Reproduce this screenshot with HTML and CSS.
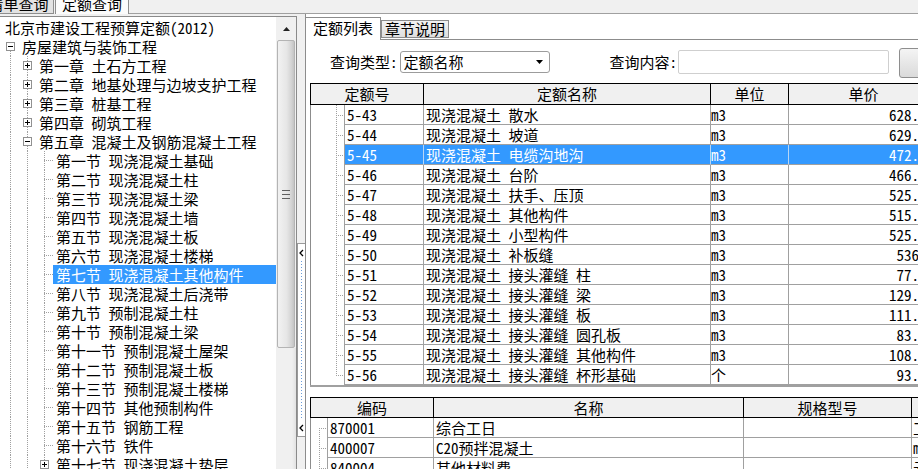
FILE: index.html
```html
<!DOCTYPE html>
<html lang="zh-CN">
<head>
<meta charset="utf-8">
<title>定额查询</title>
<link rel="stylesheet" href="styles.css">
</head>
<body>
<div class="app">
  <div class="toptabs">
    <div class="ttab ttab1">清单查询</div>
    <div class="ttab ttab2">定额查询</div>
    <div class="tfill"></div>
  </div>
  <div class="main">
    <div class="left">
      <div class="treebox">
        <div class="tree">
          <div class="tr"><span class="lbl">北京市建设工程预算定额(2012)</span></div>
          <div class="tr"><span class="gc vb"><svg class="ex" width="9" height="9" viewBox="0 0 9 9"><rect x=".5" y=".5" width="8" height="8" fill="#fff" stroke="#919191"/><path d="M2 4.5h5" stroke="#000"/></svg></span><span class="lbl">房屋建筑与装饰工程</span></div>
          <div class="tr"><span class="gc v"></span><span class="gc v"><svg class="ex" width="9" height="9" viewBox="0 0 9 9"><rect x=".5" y=".5" width="8" height="8" fill="#fff" stroke="#919191"/><path d="M2 4.5h5M4.5 2v5" stroke="#000"/></svg></span><span class="lbl">第一章 土石方工程</span></div>
          <div class="tr"><span class="gc v"></span><span class="gc v"><svg class="ex" width="9" height="9" viewBox="0 0 9 9"><rect x=".5" y=".5" width="8" height="8" fill="#fff" stroke="#919191"/><path d="M2 4.5h5M4.5 2v5" stroke="#000"/></svg></span><span class="lbl">第二章 地基处理与边坡支护工程</span></div>
          <div class="tr"><span class="gc v"></span><span class="gc v"><svg class="ex" width="9" height="9" viewBox="0 0 9 9"><rect x=".5" y=".5" width="8" height="8" fill="#fff" stroke="#919191"/><path d="M2 4.5h5M4.5 2v5" stroke="#000"/></svg></span><span class="lbl">第三章 桩基工程</span></div>
          <div class="tr"><span class="gc v"></span><span class="gc v"><svg class="ex" width="9" height="9" viewBox="0 0 9 9"><rect x=".5" y=".5" width="8" height="8" fill="#fff" stroke="#919191"/><path d="M2 4.5h5M4.5 2v5" stroke="#000"/></svg></span><span class="lbl">第四章 砌筑工程</span></div>
          <div class="tr"><span class="gc v"></span><span class="gc v"><svg class="ex" width="9" height="9" viewBox="0 0 9 9"><rect x=".5" y=".5" width="8" height="8" fill="#fff" stroke="#919191"/><path d="M2 4.5h5" stroke="#000"/></svg></span><span class="lbl">第五章 混凝土及钢筋混凝土工程</span></div>
          <div class="tr"><span class="gc v"></span><span class="gc v"></span><span class="gc vh"></span><span class="lbl">第一节 现浇混凝土基础</span></div>
          <div class="tr"><span class="gc v"></span><span class="gc v"></span><span class="gc vh"></span><span class="lbl">第二节 现浇混凝土柱</span></div>
          <div class="tr"><span class="gc v"></span><span class="gc v"></span><span class="gc vh"></span><span class="lbl">第三节 现浇混凝土梁</span></div>
          <div class="tr"><span class="gc v"></span><span class="gc v"></span><span class="gc vh"></span><span class="lbl">第四节 现浇混凝土墙</span></div>
          <div class="tr"><span class="gc v"></span><span class="gc v"></span><span class="gc vh"></span><span class="lbl">第五节 现浇混凝土板</span></div>
          <div class="tr"><span class="gc v"></span><span class="gc v"></span><span class="gc vh"></span><span class="lbl">第六节 现浇混凝土楼梯</span></div>
          <div class="tr sel"><span class="gc v"></span><span class="gc v"></span><span class="gc vh"></span><span class="lbl">第七节 现浇混凝土其他构件</span></div>
          <div class="tr"><span class="gc v"></span><span class="gc v"></span><span class="gc vh"></span><span class="lbl">第八节 现浇混凝土后浇带</span></div>
          <div class="tr"><span class="gc v"></span><span class="gc v"></span><span class="gc vh"></span><span class="lbl">第九节 预制混凝土柱</span></div>
          <div class="tr"><span class="gc v"></span><span class="gc v"></span><span class="gc vh"></span><span class="lbl">第十节 预制混凝土梁</span></div>
          <div class="tr"><span class="gc v"></span><span class="gc v"></span><span class="gc vh"></span><span class="lbl">第十一节 预制混凝土屋架</span></div>
          <div class="tr"><span class="gc v"></span><span class="gc v"></span><span class="gc vh"></span><span class="lbl">第十二节 预制混凝土板</span></div>
          <div class="tr"><span class="gc v"></span><span class="gc v"></span><span class="gc vh"></span><span class="lbl">第十三节 预制混凝土楼梯</span></div>
          <div class="tr"><span class="gc v"></span><span class="gc v"></span><span class="gc vh"></span><span class="lbl">第十四节 其他预制构件</span></div>
          <div class="tr"><span class="gc v"></span><span class="gc v"></span><span class="gc vh"></span><span class="lbl">第十五节 钢筋工程</span></div>
          <div class="tr"><span class="gc v"></span><span class="gc v"></span><span class="gc vh"></span><span class="lbl">第十六节 铁件</span></div>
          <div class="tr"><span class="gc v"></span><span class="gc v"></span><span class="gc v"><svg class="ex" width="9" height="9" viewBox="0 0 9 9"><rect x=".5" y=".5" width="8" height="8" fill="#fff" stroke="#919191"/><path d="M2 4.5h5M4.5 2v5" stroke="#000"/></svg></span><span class="lbl">第十七节 现浇混凝土垫层</span></div>
        </div>
        <div class="vscroll">
          <div class="sb-up"><svg width="7" height="4" viewBox="0 0 7 4"><path d="M0 4L3.5 0L7 4Z" fill="#222"/></svg></div>
          <div class="sb-thumb"><svg width="8" height="9" viewBox="0 0 8 9"><path d="M0 .5h8M0 4.5h8M0 8.5h8" stroke="#606060"/></svg></div>
          <div class="sb-track"></div>
        </div>
      </div>
    </div>
    <div class="splitter">
      <div class="handle">
        <svg width="7" height="192" viewBox="0 0 7 192"><path d="M5 6L2 9L5 12" fill="none" stroke="#000" stroke-width="1.3"/><path d="M3.5 17V176" stroke="#6a9bd8" stroke-dasharray="1 2"/><path d="M5 181L2 184L5 187" fill="none" stroke="#000" stroke-width="1.3"/></svg>
      </div>
    </div>
    <div class="right">
      <div class="rtabs">
        <div class="rtab on">定额列表</div>
        <div class="rtab off">章节说明</div>
      </div>
      <div class="page">
        <div class="query">
          <span class="qlabel">查询类型:</span>
          <div class="select"><span>定额名称</span><svg width="7" height="4" viewBox="0 0 7 4"><path d="M0 0H7L3.5 4Z" fill="#000"/></svg></div>
          <span class="qlabel ql2">查询内容:</span>
          <div class="input"></div>
          <div class="btn"></div>
        </div>

        <div class="grid g1">
          <div class="hdr">
            <div class="h" style="width:113px">定额号</div>
            <div class="h" style="width:287px">定额名称</div>
            <div class="h" style="width:78px">单位</div>
            <div class="h" style="width:150px">单价</div>
          </div>
          <div class="row"><span class="gut gv"></span><span class="c c1">5-43</span><span class="c c2">现浇混凝土 散水</span><span class="c c3">m3</span><span class="c c4">628.52</span></div>
          <div class="row"><span class="gut gv"></span><span class="c c1">5-44</span><span class="c c2">现浇混凝土 坡道</span><span class="c c3">m3</span><span class="c c4">629.17</span></div>
          <div class="row on"><span class="gut gv"></span><span class="c c1">5-45</span><span class="c c2">现浇混凝土 电缆沟地沟</span><span class="c c3">m3</span><span class="c c4">472.85</span></div>
          <div class="row"><span class="gut gv"></span><span class="c c1">5-46</span><span class="c c2">现浇混凝土 台阶</span><span class="c c3">m3</span><span class="c c4">466.30</span></div>
          <div class="row"><span class="gut gv"></span><span class="c c1">5-47</span><span class="c c2">现浇混凝土 扶手、压顶</span><span class="c c3">m3</span><span class="c c4">525.64</span></div>
          <div class="row"><span class="gut gv"></span><span class="c c1">5-48</span><span class="c c2">现浇混凝土 其他构件</span><span class="c c3">m3</span><span class="c c4">515.09</span></div>
          <div class="row"><span class="gut gv"></span><span class="c c1">5-49</span><span class="c c2">现浇混凝土 小型构件</span><span class="c c3">m3</span><span class="c c4">525.71</span></div>
          <div class="row"><span class="gut gv"></span><span class="c c1">5-50</span><span class="c c2">现浇混凝土 补板缝</span><span class="c c3">m3</span><span class="c c4">536.4</span></div>
          <div class="row"><span class="gut gv"></span><span class="c c1">5-51</span><span class="c c2">现浇混凝土 接头灌缝 柱</span><span class="c c3">m3</span><span class="c c4">77.18</span></div>
          <div class="row"><span class="gut gv"></span><span class="c c1">5-52</span><span class="c c2">现浇混凝土 接头灌缝 梁</span><span class="c c3">m3</span><span class="c c4">129.43</span></div>
          <div class="row"><span class="gut gv"></span><span class="c c1">5-53</span><span class="c c2">现浇混凝土 接头灌缝 板</span><span class="c c3">m3</span><span class="c c4">111.26</span></div>
          <div class="row"><span class="gut gv"></span><span class="c c1">5-54</span><span class="c c2">现浇混凝土 接头灌缝 圆孔板</span><span class="c c3">m3</span><span class="c c4">83.57</span></div>
          <div class="row"><span class="gut gv"></span><span class="c c1">5-55</span><span class="c c2">现浇混凝土 接头灌缝 其他构件</span><span class="c c3">m3</span><span class="c c4">108.92</span></div>
          <div class="row"><span class="gut gl"></span><span class="c c1">5-56</span><span class="c c2">现浇混凝土 接头灌缝 杯形基础</span><span class="c c3">个</span><span class="c c4">93.65</span></div>
        </div>

        <div class="grid g2">
          <div class="hdr">
            <div class="h" style="width:123px">编码</div>
            <div class="h" style="width:310px">名称</div>
            <div class="h" style="width:168px">规格型号</div>
            <div class="h" style="width:120px">单位</div>
          </div>
          <div class="row"><span class="gut gf"></span><span class="c d1">870001</span><span class="c d2">综合工日</span><span class="c d3"></span><span class="c d4">工日</span></div>
          <div class="row"><span class="gut gv"></span><span class="c d1">400007</span><span class="c d2">C20预拌混凝土</span><span class="c d3"></span><span class="c d4">m3</span></div>
          <div class="row"><span class="gut gv"></span><span class="c d1">840004</span><span class="c d2">其他材料费</span><span class="c d3"></span><span class="c d4">元</span></div>
        </div>
      </div>
    </div>
  </div>
</div>
</body>
</html>
```

FILE: styles.css
```css
html, body {
  margin: 0;
  padding: 0;
}
body {
  background: #f0f0f0;
  font-family: "Noto Sans Mono CJK SC", "Noto Sans CJK SC", sans-serif;
  font-size: 15px;
  color: #000;
  width: 918px;
  height: 469px;
  overflow: hidden;
}
.app {
  width: 918px;
  height: 469px;
  overflow: hidden;
  display: flex;
  flex-direction: column;
}

/* top tabs */
.toptabs {
  display: flex;
  align-items: flex-end;
  height: 14px;
  flex: none;
}
.ttab {
  height: 22px;
  box-sizing: border-box;
  line-height: 20px;
  padding-top: 2px;
  text-align: center;
  flex: none;
  white-space: nowrap;
}
.ttab1 {
  margin-left: -17px;
  width: 71px;
  background: #e2e2e2;
  border: 1px solid #8e8e8e;
  border-top: none;
}
.ttab2 {
  margin-left: 1px;
  width: 74px;
  background: #fbfbfb;
  border-left: 1px solid #8e8e8e;
  border-right: 1px solid #8e8e8e;
}
.tfill {
  flex: 1;
  height: 14px;
  box-sizing: border-box;
  border-bottom: 1px solid #a0a0a0;
}

.main {
  display: flex;
  height: 455px;
  flex: none;
}

/* left tree */
.left {
  width: 297px;
  flex: none;
  padding-top: 2px;
  box-sizing: border-box;
}
.treebox {
  display: flex;
  height: 453px;
  box-sizing: border-box;
  border-top: 1px solid #8a8a8a;
  border-right: 1px solid #8a8a8a;
  background: #fff;
}
.tree {
  width: 276px;
  flex: none;
  padding: 1px 0 0 2px;
  box-sizing: border-box;
  overflow: hidden;
}
.tr {
  display: flex;
  height: 19px;
}
.gc {
  width: 17px;
  height: 19px;
  flex: none;
  display: flex;
  align-items: center;
  justify-content: center;
}
.ex { display: block; }
.v {
  background: repeating-linear-gradient(to bottom, #a0a0a0 0 1px, transparent 1px 2px) 8px 0 / 1px 100% no-repeat;
}
.vb {
  background: repeating-linear-gradient(to bottom, #a0a0a0 0 1px, transparent 1px 2px) 8px 10px / 1px 9px no-repeat;
}
.vh {
  background:
    repeating-linear-gradient(to bottom, #a0a0a0 0 1px, transparent 1px 2px) 8px 0 / 1px 100% no-repeat,
    repeating-linear-gradient(to right, #a0a0a0 0 1px, transparent 1px 2px) 8px 9px / 9px 1px no-repeat;
}
.lbl {
  padding: 0 3px;
  line-height: 19px;
  white-space: nowrap;
}
.tr.sel .lbl {
  flex: 1;
  background: #3399ff;
  color: #fff;
}

/* scrollbar */
.vscroll {
  width: 20px;
  flex: none;
  display: flex;
  flex-direction: column;
  background: #f0f0f0;
}
.sb-up {
  height: 23px;
  flex: none;
  display: flex;
  align-items: center;
  justify-content: center;
}
.sb-thumb {
  height: 308px;
  flex: none;
  margin: 0 1px;
  box-sizing: border-box;
  border: 1px solid #b4b4b4;
  border-radius: 2px;
  background: linear-gradient(to right, #f2f2f2 0%, #e6e6e6 55%, #d2d2d2 85%, #c4c4c4 100%);
  display: flex;
  align-items: center;
  justify-content: center;
}
.sb-track {
  flex: 1;
  background: linear-gradient(to right, #f0f0f0 0%, #f0f0f0 80%, #e2e2e2 100%);
}

/* splitter */
.splitter {
  width: 8px;
  flex: none;
}
.handle {
  margin-top: 229px;
  height: 194px;
  box-sizing: border-box;
  border: 1px solid #9a9a9a;
  border-right: none;
  background: #fff;
}
.handle svg { display: block; }

/* right */
.right {
  flex: 1;
  min-width: 0;
  border-left: 1px solid #8c8c8c;
  background: #fff;
  overflow: hidden;
  display: flex;
  flex-direction: column;
}
.rtabs {
  display: flex;
  align-items: flex-end;
  height: 26px;
  flex: none;
  box-sizing: border-box;
  border-bottom: 1px solid #8c8c8c;
}
.rtab {
  box-sizing: border-box;
  flex: none;
  white-space: nowrap;
}
.rtab.on {
  width: 75px;
  height: 23px;
  margin-bottom: -1px;
  border-top: 1px solid #8c8c8c;
  border-right: 1px solid #8c8c8c;
  background: #fff;
  line-height: 20px;
  padding-left: 7px;
}
.rtab.off {
  width: 68px;
  height: 18px;
  margin-bottom: 1px;
  border: 1px solid #8c8c8c;
  background: linear-gradient(#f3f3f3, #dedede);
  line-height: 16px;
  text-align: center;
}
.page {
  padding-left: 4px;
}
.query {
  display: flex;
  align-items: center;
  height: 43px;
  padding-left: 20px;
}
.qlabel {
  white-space: nowrap;
  line-height: 19px;
  flex: none;
}
.select {
  width: 150px;
  height: 22px;
  margin-left: 2px;
  flex: none;
  box-sizing: border-box;
  border: 1px solid #9c9c9c;
  border-radius: 3px;
  background: #fff;
  display: flex;
  align-items: center;
  justify-content: space-between;
  padding: 0 6px 0 3px;
  line-height: 19px;
}
.ql2 {
  margin-left: 60px;
}
.input {
  width: 211px;
  height: 24px;
  margin-left: 1px;
  flex: none;
  box-sizing: border-box;
  border: 1px solid #cfcfcf;
  border-radius: 2px;
  background: #fff;
}
.btn {
  width: 60px;
  height: 30px;
  margin-left: 10px;
  margin-top: 2px;
  flex: none;
  box-sizing: border-box;
  border: 1px solid #8e8e8e;
  border-radius: 3px;
  background: linear-gradient(#f4f4f4, #dadada);
}

/* grids */
.grid {
  width: 700px;
}
.g1 {
  border-bottom: 2px solid #a0a0a0;
}
.g2 {
  margin-top: 10px;
}
.hdr {
  display: flex;
  box-sizing: border-box;
  border-top: 1px solid #000;
  border-bottom: 1px solid #000;
  border-left: 1px solid #000;
  background: #f0f0f0;
}
.g1 .hdr { height: 22px; }
.g2 .hdr { height: 21px; }
.h {
  flex: none;
  box-sizing: border-box;
  border-right: 1px solid #000;
  text-align: center;
  white-space: nowrap;
}
.g1 .h { line-height: 20px; }
.g2 .h { line-height: 19px; }
.row {
  display: flex;
  height: 20px;
  border-left: 1px solid #8c8c8c;
}
.gut {
  flex: none;
  height: 20px;
  background: #fff;
}
.g1 .gut { width: 33px; }
.g2 .gut { width: 16px; }
.g1 .gv {
  background:
    repeating-linear-gradient(to bottom, #a0a0a0 0 1px, transparent 1px 2px) 25px 0 / 1px 100% no-repeat,
    repeating-linear-gradient(to right, #a0a0a0 0 1px, transparent 1px 2px) 25px 10px / 8px 1px no-repeat;
}
.g1 .gl {
  background:
    repeating-linear-gradient(to bottom, #a0a0a0 0 1px, transparent 1px 2px) 25px 0 / 1px 11px no-repeat,
    repeating-linear-gradient(to right, #a0a0a0 0 1px, transparent 1px 2px) 25px 10px / 8px 1px no-repeat;
}
.g2 .gv {
  background:
    repeating-linear-gradient(to bottom, #a0a0a0 0 1px, transparent 1px 2px) 8px 0 / 1px 100% no-repeat,
    repeating-linear-gradient(to right, #a0a0a0 0 1px, transparent 1px 2px) 8px 10px / 8px 1px no-repeat;
}
.g2 .gf {
  background:
    repeating-linear-gradient(to bottom, #a0a0a0 0 1px, transparent 1px 2px) 8px 10px / 1px 10px no-repeat,
    repeating-linear-gradient(to right, #a0a0a0 0 1px, transparent 1px 2px) 8px 10px / 8px 1px no-repeat;
}
.c {
  flex: none;
  height: 20px;
  box-sizing: border-box;
  border-right: 1px solid #a0a0a0;
  border-bottom: 1px solid #a0a0a0;
  line-height: 19px;
  white-space: nowrap;
  overflow: hidden;
}
.c1 { width: 80px; border-left: 1px solid #a0a0a0; padding-left: 2px; }
.c2 { width: 287px; padding-left: 2px; }
.c3 { width: 78px; }
.c4 { width: 150px; text-align: right; padding-right: 4px; }
.d1 { width: 107px; border-left: 1px solid #a0a0a0; padding-left: 2px; }
.d2 { width: 310px; padding-left: 2px; }
.d3 { width: 168px; }
.d4 { width: 120px; padding-left: 1px; }
.row.on .c {
  background: #3399ff;
  color: #fff;
  border-right-color: #b8d6f5;
}
```
